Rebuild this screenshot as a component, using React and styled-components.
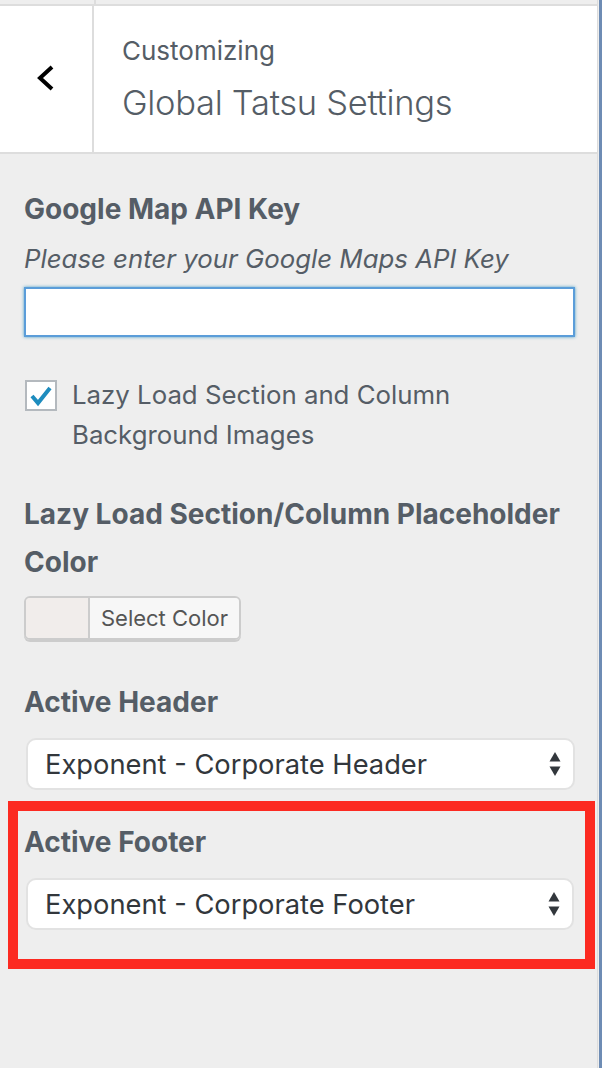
import React from 'react';
import styled, { createGlobalStyle } from 'styled-components';

const GlobalStyle = createGlobalStyle`
  html, body {
    margin: 0;
    padding: 0;
    background: #eee;
  }
  body {
    font-family: Inter, "Noto Sans", sans-serif;
    color: #555d66;
    -webkit-font-smoothing: antialiased;
  }
`;

const Page = styled.div`
  display: flex;
  height: 1068px;
  overflow: hidden;
`;

const Sidebar = styled.div`
  flex: 1;
  display: flex;
  flex-direction: column;
  background: #eee;
  border-right: 1px solid #dcdcdc;
`;

const EdgeStrip = styled.div`
  width: 3px;
  margin-left: 1px;
  background: #6e8cb4;
`;

const TopStrip = styled.div`
  display: flex;
  height: 4px;
  background: #eee;
  border-bottom: 2px solid #ddd;
`;

const TopCell = styled.div`
  width: 94px;
  border-right: 2px solid #ddd;
`;

const Header = styled.div`
  display: flex;
  height: 146px;
  background: #fff;
  border-bottom: 2px solid #ddd;
`;

const BackButton = styled.button`
  width: 94px;
  border: none;
  border-right: 2px solid #ddd;
  background: transparent;
  display: flex;
  align-items: center;
  justify-content: center;
  padding: 0;
  cursor: pointer;
`;

const TitleBlock = styled.div`
  display: flex;
  flex-direction: column;
  padding: 25px 0 0 28px;
`;

const Action = styled.span`
  font-size: 26px;
  line-height: 40px;
  font-weight: 400;
  color: #555d66;
`;

const Title = styled.h3`
  margin: 0;
  font-size: 34.5px;
  line-height: 64px;
  font-weight: 300;
  color: #555d66;
  letter-spacing: -0.3px;
`;

const Content = styled.div`
  display: flex;
  flex-direction: column;
  padding: 31px 22px 0 24px;
`;

const ControlTitle = styled.span`
  display: block;
  font-size: 28px;
  line-height: 48px;
  font-weight: 700;
  color: #555d66;
  margin-top: ${(p) => p.$top || 0}px;
`;

const Description = styled.span`
  display: block;
  font-size: 25.8px;
  line-height: 52px;
  font-style: italic;
  color: #555d66;
`;

const TextInput = styled.input`
  box-sizing: border-box;
  width: 100%;
  height: 50px;
  margin-top: 2px;
  border: 2px solid #5b9dd9;
  box-shadow: 0 0 3px rgba(30, 140, 190, 0.8);
  background: #fff;
  outline: none;
  font-size: 24px;
  padding: 0 10px;
`;

const CheckRow = styled.label`
  display: flex;
  align-items: flex-start;
  margin-top: 38px;
  padding-right: 40px;
  cursor: pointer;
`;

const CheckBox = styled.span`
  box-sizing: border-box;
  flex: none;
  width: 32px;
  height: 31px;
  margin: 5px 15px 0 1px;
  border: 2px solid #b4b9be;
  background: #fff;
  display: flex;
  align-items: center;
  justify-content: center;
`;

const CheckLabel = styled.span`
  font-size: 25.8px;
  line-height: 40px;
  color: #555d66;
`;

const ColorPicker = styled.div`
  display: flex;
  width: 217px;
  height: 44px;
  margin-top: 10px;
  border: 2px solid #ccc;
  border-radius: 6px;
  box-shadow: 0 2px 0 #ccc;
  overflow: hidden;
  box-sizing: border-box;
`;

const Swatch = styled.span`
  width: 62px;
  background: ${(p) => p.$color};
  border-right: 2px solid #ccc;
`;

const ColorButton = styled.span`
  flex: 1;
  background: #f7f7f7;
  display: flex;
  align-items: center;
  justify-content: center;
  font-size: 22px;
  color: #555;
`;

const SelectBox = styled.div`
  box-sizing: border-box;
  display: flex;
  align-items: center;
  justify-content: space-between;
  height: 52px;
  margin: 12px 0 0 2px;
  padding: 0 12px 0 17px;
  background: #fff;
  border: 2px solid #e2e2e2;
  border-radius: 10px;
  font-size: 27.3px;
  color: #32373c;
`;

const Highlight = styled.div`
  margin: 11px -20px 0 -16px;
  padding: 7px 11px 29px 6px;
  border: 10px solid #fc2a21;
`;

const Arrows = () => (
  <svg width="12" height="24" viewBox="0 0 12 24">
    <path d="M6 0 L11.5 9.5 H0.5 Z" fill="#32373c" />
    <path d="M6 24 L11.5 14.5 H0.5 Z" fill="#32373c" />
  </svg>
);

const Select = ({ children }) => (
  <SelectBox>
    <span>{children}</span>
    <Arrows />
  </SelectBox>
);

export default function App() {
  return (
    <>
      <GlobalStyle />
      <Page>
        <Sidebar>
          <TopStrip>
            <TopCell />
          </TopStrip>
          <Header>
            <BackButton aria-label="Back">
              <svg width="20" height="30" viewBox="0 0 20 30">
                <polyline points="16,3 4,14 16,25" fill="none" stroke="#000" strokeWidth="4" />
              </svg>
            </BackButton>
            <TitleBlock>
              <Action>Customizing</Action>
              <Title>Global Tatsu Settings</Title>
            </TitleBlock>
          </Header>
          <Content>
            <ControlTitle>Google Map API Key</ControlTitle>
            <Description>Please enter your Google Maps API Key</Description>
            <TextInput type="text" />

            <CheckRow>
              <CheckBox>
                <svg width="24" height="22" viewBox="0 0 24 22">
                  <polyline points="3,11 9,18 21,3" fill="none" stroke="#1e8cbe" strokeWidth="4" />
                </svg>
              </CheckBox>
              <CheckLabel>Lazy Load Section and Column Background Images</CheckLabel>
            </CheckRow>

            <ControlTitle $top={35}>Lazy Load Section/Column Placeholder Color</ControlTitle>
            <ColorPicker>
              <Swatch $color="#f1edeb" />
              <ColorButton>Select Color</ColorButton>
            </ColorPicker>

            <ControlTitle $top={38}>Active Header</ControlTitle>
            <Select>Exponent - Corporate Header</Select>

            <Highlight>
              <ControlTitle>Active Footer</ControlTitle>
              <Select>Exponent - Corporate Footer</Select>
            </Highlight>
          </Content>
        </Sidebar>
        <EdgeStrip />
      </Page>
    </>
  );
}
